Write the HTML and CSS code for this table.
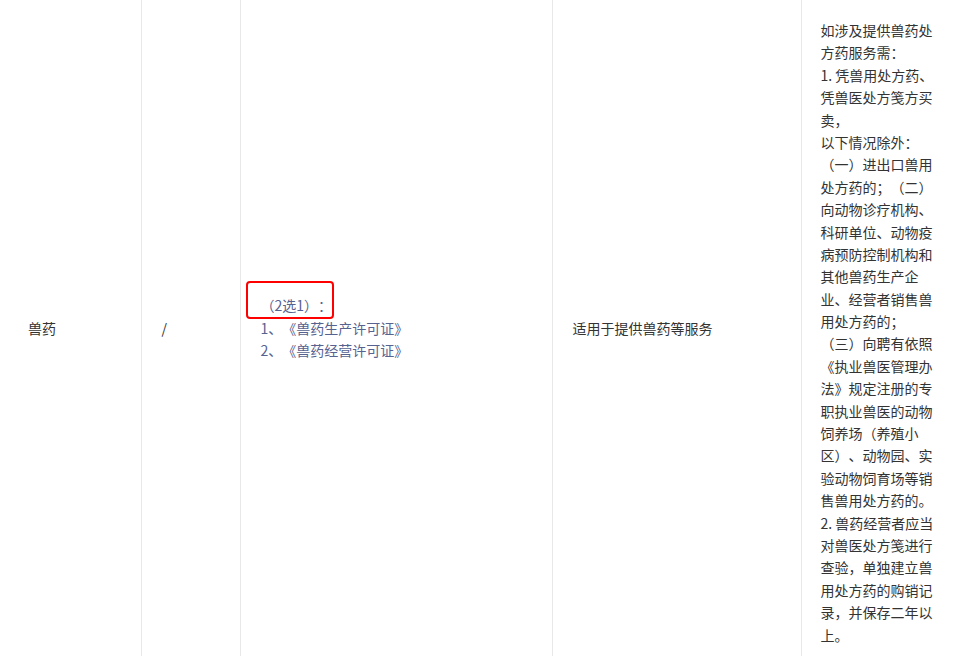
FILE: index.html
```html
<!DOCTYPE html>
<html lang="zh-CN">
<head>
    <meta charset="UTF-8">
    <title>兽药</title>
    <link rel="stylesheet" href="styles.css">
</head>
<body>

    <table class="license-table">
        <colgroup>
            <col class="col-name">
            <col class="col-code">
            <col class="col-cert">
            <col class="col-scope">
            <col class="col-note">
        </colgroup>
        <tr>
            <td>兽药</td>
            <td>/</td>
            <td>
                <div class="cert">
                    <p>&nbsp;</p>
                    <p>（2选1）：</p>
                    <p>1、《兽药生产许可证》</p>
                    <p>2、《兽药经营许可证》</p>
                    <p>&nbsp;</p>
                    <span class="mark"></span>
                </div>
            </td>
            <td>适用于提供兽药等服务</td>
            <td class="note">
                如涉及提供兽药处方药服务需：<br>
                1. 凭兽用处方药、凭兽医处方笺方买卖，<br>
                以下情况除外：<br>
                （一）进出口兽用处方药的；（二）向动物诊疗机构、科研单位、动物疫病预防控制机构和其他兽药生产企业、经营者销售兽用处方药的；<br>
                （三）向聘有依照《执业兽医管理办法》规定注册的专职执业兽医的动物饲养场（养殖小区）、动物园、实验动物饲育场等销售兽用处方药的。<br>
                2. 兽药经营者应当对兽医处方笺进行查验，单独建立兽用处方药的购销记录，并保存二年以上。
            </td>
        </tr>
    </table>

</body>
</html>
```

FILE: styles.css
```css
body { margin: 0; background-color: #fff; font-family: "Noto Sans CJK SC", "Liberation Sans", sans-serif; font-size: 14px; color: #333; text-spacing-trim: space-all; }
.license-table { margin-left: 8px; width: 947px; table-layout: fixed; border-collapse: collapse; line-height: 1.6; }
.col-name { width: 133px; }
.col-code { width: 99px; }
.col-cert { width: 312px; }
.col-scope { width: 249px; }
.col-note { width: 154px; }
td { padding: 10px 20px; vertical-align: middle; border-left: 1px solid #e8e8e8; }
td:first-child { border-left: none; }
td.note { padding: 19px 19px 10px 19px; }
.cert { position: relative; color: #56628f; }
.cert p { margin: 0; }
.mark { position: absolute; left: -15px; top: 9px; width: 88px; height: 38px; box-sizing: border-box; border: 2px solid #f00; border-radius: 4px; }
```
